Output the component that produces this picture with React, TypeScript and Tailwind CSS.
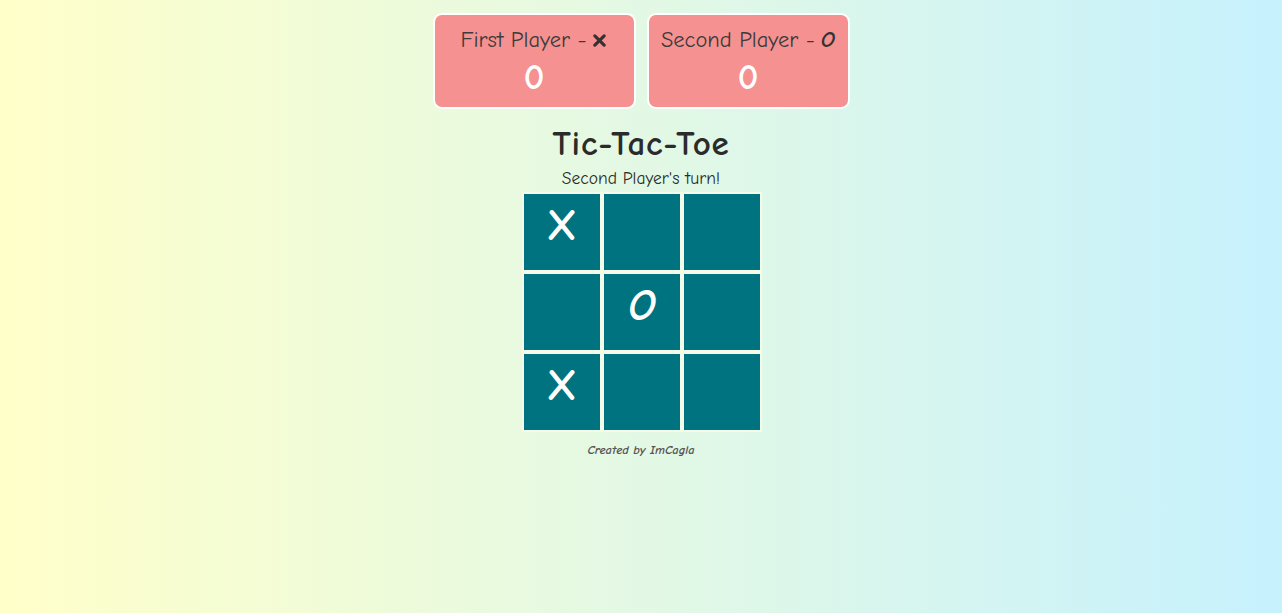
import React from 'react';

// Tic-Tac-Toe board snapshot — score cards, title, status line, 3x3 grid, credit.
const FONT = 'font-["Comic_Sans_MS","Comic_Neue","Open_Sans",sans-serif]';

const BOARD: string[] = ['X', '', '', '', 'O', '', 'X', '', ''];

function CrossMark() {
  return (
    <svg viewBox="0 0 16 14" className="ml-[6px] inline-block h-[13px] w-[15px]" aria-hidden="true">
      <path d="M3 2 L13 12 M13 2 L3 12" stroke="#333" strokeWidth="3.4" strokeLinecap="round" />
    </svg>
  );
}

function ScoreCard({ label, mark, score }: { label: string; mark: React.ReactNode; score: number }) {
  return (
    <div className="flex h-[96px] w-[203px] flex-col items-center justify-center rounded-[9px] border-2 border-white bg-[#f59190]">
      <div className="flex items-center text-[22.5px] leading-[30px] text-[#3b3b3b]">
        <span>{label} -</span>
        {mark}
      </div>
      <div className="mt-[4px] text-[36px] font-bold leading-[38px] text-white">{score}</div>
    </div>
  );
}

export default function App() {
  return (
    <div
      className={`${FONT} flex h-[613px] w-full flex-col items-center bg-gradient-to-r from-[#ffffc9] to-[#c6f1fd]`}
    >
      <div className="mt-[13px] flex gap-[11px]">
        <ScoreCard label="First Player" mark={<CrossMark />} score={0} />
        <ScoreCard
          label="Second Player"
          mark={<span className="ml-[6px] font-bold italic text-[#333]">O</span>}
          score={0}
        />
      </div>
      <h1 className="mt-[15px] text-[35px] font-bold leading-[40px] tracking-[0.8px] text-[#2b2b2b]">
        Tic-Tac-Toe
      </h1>
      <p className="mt-[4px] text-[17.5px] leading-[20px] text-[#2b2b2b]">Second Player's turn!</p>
      <div className="ml-[2px] mt-[4px] grid grid-cols-[repeat(3,80px)] grid-rows-[repeat(3,80px)]">
        {BOARD.map((cell, i) => (
          <div
            key={i}
            className="flex items-center justify-center border-2 border-[#f6fbe9] bg-[#007380] pb-[12px] text-[44px] font-bold leading-[48px] text-white"
          >
            <span className={cell === 'O' ? 'italic' : ''}>{cell}</span>
          </div>
        ))}
      </div>
      <p className="mt-[11px] text-[12.5px] font-bold italic leading-[14px] text-[#555]">Created by ImCagla</p>
    </div>
  );
}
